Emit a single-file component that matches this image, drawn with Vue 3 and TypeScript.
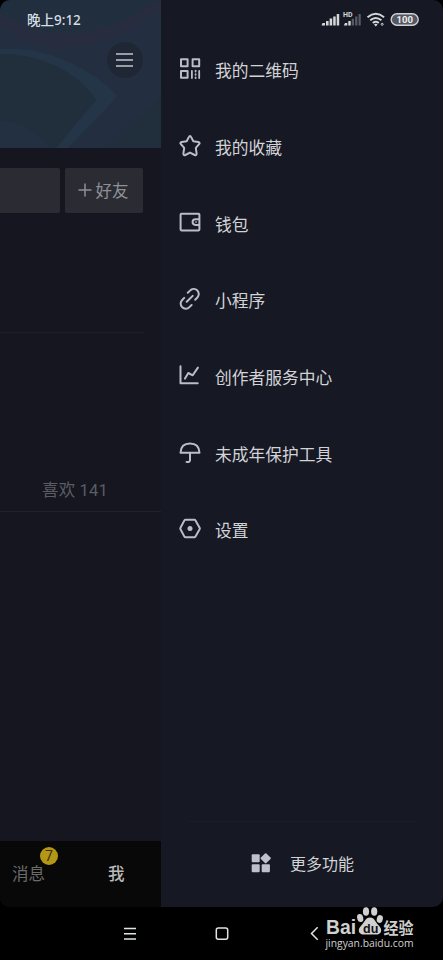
<script setup lang="ts">
type IconName = 'qr' | 'star' | 'wallet' | 'link' | 'chart' | 'umbrella' | 'settings'

interface MenuItem {
  icon: IconName
  label: string
}

const items: MenuItem[] = [
  { icon: 'qr', label: '我的二维码' },
  { icon: 'star', label: '我的收藏' },
  { icon: 'wallet', label: '钱包' },
  { icon: 'link', label: '小程序' },
  { icon: 'chart', label: '创作者服务中心' },
  { icon: 'umbrella', label: '未成年保护工具' },
  { icon: 'settings', label: '设置' },
]
</script>

<template>
  <div class="phone">
    <div class="screen">
      <section class="profile">
        <header class="cover">
          <svg class="cover-art" viewBox="0 0 161 148" aria-hidden="true">
            <defs>
              <linearGradient id="sky" x1="0" y1="0" x2="0" y2="1">
                <stop offset="0" stop-color="#202e3e" />
                <stop offset="1" stop-color="#24303f" />
              </linearGradient>
            </defs>
            <rect width="161" height="148" fill="url(#sky)" />
            <path d="M0 12Q78 70 161 -2V148H0Z" fill="#232f40" />
            <path d="M0 13Q78 60 161 -3V9Q78 75 0 27Z" fill="#272d3f" />
            <path d="M0 49C48 46 90 68 118 96L68 148H0Z" fill="#233547" />
            <path d="M0 54C42 54 78 72 96 100L56 148H0Z" fill="#212e3c" />
            <path d="M161 95V148H105Z" fill="#212f3d" />
            <path d="M0 121Q32 122 50 148H0Z" fill="#233041" />
          </svg>
          <time class="clock">晚上9:12</time>
          <button class="burger" aria-label="菜单"><i></i><i></i><i></i></button>
        </header>
        <div class="actions">
          <div class="action edit"></div>
          <div class="action friend">
            <svg width="14" height="14" viewBox="0 0 14 14"><path d="M7 .5v13M.5 7h13" stroke="#8f9095" stroke-width="1.5" /></svg>
            <span>好友</span>
          </div>
        </div>
        <div class="bio"></div>
        <div class="likes">喜欢 141</div>
        <div class="works"></div>
        <nav class="tabs">
          <span class="tab">消息<b class="badge">7</b></span>
          <span class="tab active">我</span>
        </nav>
      </section>

      <aside class="drawer">
        <div class="status">
          <svg width="102" height="18" viewBox="0 0 102 18">
            <g fill="#d4d6da">
              <path d="M1.5 13h2.5v2.5H.5Zm3.5-2h2.6v4.5H5Zm3.6-2.5h2.6v7H8.6Zm3.6-2h2.5v9h-2.5Zm3.5-2.5h2.5v11.5h-2.5Z" />
              <path d="M24 13h2.3v2.5H22.8Zm3.3-2h2.4v4.5h-2.4Z" />
            </g>
            <path d="M30.7 8.8h2.3v6.7h-2.3Zm3.4-2.3h2.3v9h-2.3ZM37.5 4h2.3v11.5h-2.3Z" fill="#555962" />
            <text x="22" y="7" class="hd">HD</text>
            <g fill="none" stroke="#d4d6da" stroke-width="2">
              <path d="M46.5 7.2q8.3-6.8 16.6 0M49.2 10.3q5.6-4.6 11.2 0M51.8 13q3-2.4 6 0" />
              <circle cx="61.2" cy="14.3" r="1" stroke-width="1" />
            </g>
            <path d="M53 14.4q1.8-1.3 3.6 0l-1.8 2Z" fill="#d4d6da" />
            <rect x="70.2" y="3.7" width="27" height="11.6" rx="5.8" fill="#555861" stroke="#cfd1d5" stroke-width="1.4" />
            <text x="83.7" y="13" text-anchor="middle" class="power">100</text>
          </svg>
        </div>

        <ul class="menu">
          <li v-for="item in items" :key="item.icon" class="menu-item">
            <svg class="icon" viewBox="0 0 22 22" aria-hidden="true">
              <g v-if="item.icon === 'qr'">
                <path d="M2 1.2h6.6v7H2Zm11.6 0h6.6v7h-6.6ZM2 13.1h6.6v6.7H2Z" />
                <path d="M12.9 12.8v7.3M16.6 12.6v1M16.6 16.2v.6M16.6 19.4v.7M20.2 12.8v7.3" stroke-width="1.8" />
              </g>
              <path v-else-if="item.icon === 'star'" d="M11 1Q11.7 1 12.2 2.1L14.3 6.3L19.2 7.1Q21.5 7.6 20.1 9.1L16.8 12.9L17.6 18.4Q17.7 20.9 15.7 20L11 17.6L6.3 20Q4.3 20.9 4.4 18.4L5.2 12.9L1.9 9.1Q.5 7.6 2.8 7.1L7.7 6.3L9.8 2.1Q10.3 1 11 1Z" />
              <g v-else-if="item.icon === 'wallet'">
                <rect x="1.6" y="1.8" width="18.8" height="16.6" rx=".8" />
                <path d="M20 7.3h-3.6q-2.8 0-2.8 2.8t2.8 2.8H20" />
                <path d="M16.8 10.1h.4" stroke-width="1.5" />
              </g>
              <g v-else-if="item.icon === 'link'">
                <path d="M8.8 4.7L11 2.6A4.9 4.9 0 0 1 18.4 9.5L16.2 11.8M12.6 17L10.4 19.1A4.9 4.9 0 0 1 3 12.2L5.2 9.9M7.7 13.8L13.7 7.9" />
              </g>
              <g v-else-if="item.icon === 'chart'">
                <path d="M1.5 1.2v17.1h17.2M6 13.6l3.3-5.6 4.4 2.3 5.2-7.7" />
              </g>
              <g v-else-if="item.icon === 'umbrella'">
                <path d="M1.5 10.7Q1.9 1.4 11 1.4t9.5 9.3ZM11 11v7.2q-.2 2.5-3.5 1.7" />
              </g>
              <g v-else>
                <path d="M6.6 1.7h8.7q.8 0 1.2.7l4.1 7.4q.4.7 0 1.4l-4.1 7.4q-.4.7-1.2.7H6.6q-.8 0-1.2-.7L1.5 11.2q-.4-.7 0-1.4l3.9-7.4q.4-.7 1.2-.7Z" />
                <circle cx="11" cy="10.5" r="2.5" class="solid" />
              </g>
            </svg>
            <span class="label">{{ item.label }}</span>
          </li>
        </ul>

        <footer class="more">
          <svg width="20" height="20" viewBox="0 0 20 20" fill="#bfc0c9">
            <rect x=".7" y="1.2" width="8" height="8" rx="1" />
            <rect x=".7" y="11.2" width="8" height="8" rx="1" />
            <rect x="10.7" y="11.2" width="8.2" height="8" rx="1" />
            <rect x="10.8" y="1.4" width="7.8" height="7.8" rx="1" transform="rotate(45 14.7 5.3)" />
          </svg>
          <span>更多功能</span>
        </footer>
      </aside>
    </div>

    <nav class="system">
      <svg class="sys-menu" width="14" height="14" viewBox="0 0 14 14"><path d="M1 1.5h12M1 6.7h12M1 11.9h12" /></svg>
      <svg class="sys-home" width="14" height="14" viewBox="0 0 14 14"><rect x="1.3" y=".9" width="11.4" height="11.4" rx="2" /></svg>
      <svg class="sys-back" width="9" height="14" viewBox="0 0 9 14"><path d="M7.7.3L1.5 6.5l6.2 6.2" /></svg>
      <div class="brand">
        <svg width="92" height="48" viewBox="0 0 92 48">
          <g fill="#d0d0d0">
            <text x="1" y="31.5" class="latin" textLength="30" lengthAdjust="spacingAndGlyphs">Bai</text>
            <ellipse cx="35.2" cy="16" rx="3" ry="4.1" transform="rotate(-15 35.2 16)" />
            <ellipse cx="41" cy="9.5" rx="3.1" ry="4.3" />
            <ellipse cx="49.2" cy="9.5" rx="3.1" ry="4.3" />
            <ellipse cx="54.8" cy="17" rx="3" ry="4" transform="rotate(15 54.8 17)" />
            <path d="M45 15.5c4.7 0 5.6 5 8.7 8 4.7 4.5 2.2 9.3-2.9 9.1-3.9-.2-7.7-.2-11.6 0-5.1.2-7.6-4.6-2.9-9.1 3.1-3 4-8 8.7-8Z" />
            <text x="58.5" y="31.5" class="han" textLength="30" lengthAdjust="spacingAndGlyphs">经验</text>
            <text x="0.5" y="45" class="site" textLength="88" lengthAdjust="spacingAndGlyphs">jingyan.baidu.com</text>
          </g>
          <text x="38" y="31" class="du">du</text>
        </svg>
      </div>
    </nav>
  </div>
</template>

<style>
body {
  margin: 0;
  background: #000;
}
</style>

<style scoped>
.phone {
  width: 443px;
  height: 960px;
  display: flex;
  flex-direction: column;
  background: #000;
  font-family: Roboto, "Noto Sans CJK SC", sans-serif;
  overflow: hidden;
}
.screen {
  height: 907px;
  display: flex;
  border-radius: 10px;
  overflow: hidden;
}
.profile {
  width: 161px;
  display: flex;
  flex-direction: column;
  background: #15161f;
}
.cover {
  position: relative;
  height: 148px;
  flex: none;
}
.cover-art {
  position: absolute;
  inset: 0;
  width: 161px;
  height: 148px;
}
.clock {
  position: absolute;
  left: 27px;
  top: 10px;
  font: 500 13.5px/20px "Noto Sans", "Noto Sans CJK SC", sans-serif;
  color: #d7dde3;
  white-space: nowrap;
}
.burger {
  position: absolute;
  left: 107px;
  top: 42px;
  width: 36px;
  height: 36px;
  padding: 0 1px 1px 0;
  border: 0;
  border-radius: 50%;
  background: #1f2734;
  display: flex;
  flex-direction: column;
  align-items: center;
  justify-content: center;
  gap: 4px;
}
.burger i {
  width: 17px;
  height: 2px;
  background: #9a9da4;
}
.actions {
  display: flex;
  gap: 5px;
  padding-top: 20px;
  height: 45px;
}
.action {
  background: #2b2c33;
  border-radius: 2px;
}
.edit {
  width: 60px;
  border-radius: 0 2px 2px 0;
}
.friend {
  box-sizing: border-box;
  width: 78px;
  padding: 0 2px 1px 0;
  display: flex;
  align-items: center;
  justify-content: center;
  gap: 4px;
  color: #8f9095;
  font-size: 16.5px;
}
.bio {
  height: 119px;
  margin-right: 16px;
  border-bottom: 1px solid #1d1e27;
}
.likes {
  box-sizing: border-box;
  height: 179px;
  padding: 146px 0 0 42px;
  border-bottom: 1px solid #20212a;
  font-size: 16.5px;
  line-height: 24px;
  letter-spacing: .15px;
  color: #5b5c64;
}
.works {
  flex: 1;
}
.tabs {
  box-sizing: border-box;
  height: 66px;
  padding-top: 1px;
  display: flex;
  align-items: center;
  background: #080808;
  font-size: 16.5px;
  line-height: 24px;
}
.tab {
  position: relative;
  margin-left: 12px;
  color: #6b6b6b;
}
.tab.active {
  margin-left: 63px;
  color: #b9b9b9;
  font-weight: 500;
}
.badge {
  position: absolute;
  left: 28px;
  top: -16px;
  width: 18px;
  height: 18px;
  border-radius: 50%;
  background: #b59716;
  color: #37300f;
  font-size: 14px;
  font-weight: 400;
  line-height: 19px;
  text-align: center;
}
.drawer {
  flex: 1;
  display: flex;
  flex-direction: column;
  background: #161823;
}
.status {
  height: 31px;
  box-sizing: border-box;
  padding: 10px 20px 0 0;
  display: flex;
  justify-content: flex-end;
}
.hd {
  font: 700 7px Roboto, sans-serif;
  fill: #d4d6da;
}
.power {
  font: 700 9.5px Roboto, sans-serif;
  fill: #eeeeef;
}
.menu {
  list-style: none;
  margin: 0;
  padding: 0;
}
.menu-item {
  height: 76.7px;
  display: flex;
  align-items: center;
  gap: 14px;
  padding-left: 18px;
  font-size: 16.75px;
  line-height: 24px;
  color: #d2d3d7;
}
.label {
  padding-top: 4px;
}
.icon {
  width: 22px;
  height: 22px;
  fill: none;
  stroke: #bcbdc5;
  stroke-width: 2;
  stroke-linecap: round;
  stroke-linejoin: round;
}
.solid {
  fill: #bcbdc5;
  stroke: none;
}
.more {
  box-sizing: border-box;
  height: 86px;
  margin: auto 27px 0 29px;
  border-top: 1px solid #1d1e29;
  display: flex;
  align-items: center;
  gap: 19px;
  padding: 0 0 3px 61px;
  font-size: 16px;
  color: #d2d3d7;
}
.system {
  height: 53px;
  display: flex;
  align-items: center;
  fill: none;
  stroke: #e0e4e4;
  stroke-width: 1.5;
}
.sys-menu {
  margin-left: 123px;
}
.sys-home {
  margin-left: 78px;
}
.sys-back {
  margin-left: 81px;
}
.brand {
  height: 48px;
  margin: -16px 0 0 6px;
  stroke: none;
}
.latin {
  font: 700 20px "Liberation Sans", sans-serif;
}
.han {
  font: 700 15.5px "Noto Sans CJK SC", sans-serif;
}
.site {
  font: 500 10.5px "Open Sans", "Noto Sans", sans-serif;
}
.du {
  font: 700 12.5px "Liberation Sans", sans-serif;
  fill: #111;
}
</style>
